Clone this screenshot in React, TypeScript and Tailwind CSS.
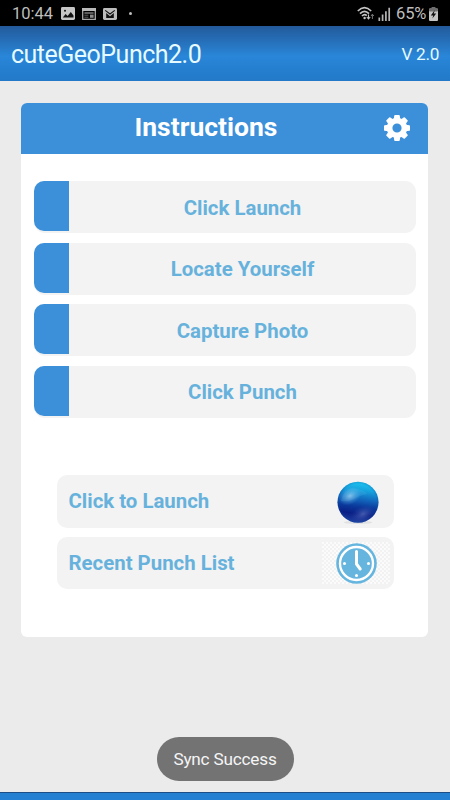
const steps = ["Click Launch", "Locate Yourself", "Capture Photo", "Click Punch"];

function StatusBar() {
  return (
    <div className="flex h-[26px] shrink-0 items-center bg-black pt-px text-[#bdbdbd]">
      <span className="ml-3 w-[49px] pt-px text-[16.5px] leading-none whitespace-nowrap">10:44</span>
      {/* picture */}
      <svg className="h-[13px] w-[14px]" viewBox="0 0 14 13">
        <rect x="0" y="0" width="14" height="13" rx="1.4" fill="#c6c6c6" />
        <path d="M1.8 10.6 4.6 7l2 2 3.2-4 2.7 3.4v2.2z" fill="#111" />
        <circle cx="4" cy="3.8" r="1" fill="#111" />
      </svg>
      {/* news */}
      <svg className="ml-[7px] h-[13px] w-[14px]" viewBox="0 0 14 13">
        <path d="M0.7 2v10.3h12.6V2" fill="none" stroke="#a9a9a9" strokeWidth="1.3" />
        <path d="M0 1h14v3H0z" fill="#b9b9b9" />
        <path d="M2.4 6h9.2" stroke="#9a9a9a" strokeWidth="1.2" />
        <path d="M2.4 8.2h4M2.4 10.2h4" stroke="#5f5f5f" />
        <path d="M8 7.6h3.6v3.2H8z" fill="#8c8c8c" />
      </svg>
      {/* mail */}
      <svg className="ml-[7px] h-[12px] w-[14px]" viewBox="0 0 14 12">
        <rect width="14" height="12" rx="1.4" fill="#bcbcbc" />
        <path d="M3.2 5v5h7.6V5L7 8.2z" fill="#111" />
        <path d="M2.2 2.4 7 6l4.8-3.6" fill="none" stroke="#111" strokeWidth="1.1" />
      </svg>
      <span className="ml-3 size-[3px] rounded-full bg-[#bdbdbd]" />

      {/* wifi */}
      <svg className="ml-auto h-[15px] w-[18px]" viewBox="0 0 18 15">
        <g fill="none" stroke="#c4c4c4" strokeWidth="1.7">
          <path d="M0.8 5Q7.5 -1.6 14.2 5" />
          <path d="M3 7.6Q7.5 3 12 7.6" />
          <path d="M5 10Q7.5 7.4 9.8 9.6" />
        </g>
        <circle cx="7.6" cy="12" r="1.2" fill="#c4c4c4" />
        <path d="M11.5 8.4v4.4M9.8 11l1.7 2 1.7-2" fill="none" stroke="#c4c4c4" strokeWidth="1.1" />
        <path d="M15.4 13V8.2M14 10l1.4-1.8 1.4 1.8" fill="none" stroke="#777" strokeWidth="1" />
      </svg>
      {/* signal */}
      <svg className="ml-[3px] h-[14px] w-[13px]" viewBox="0 0 13 14">
        <path d="M1.3 10.5V14M4.6 7.5V14M7.9 4.2V14M11.2 0.8V14" stroke="#b4b4b4" strokeWidth="1.7" />
      </svg>
      <span className="ml-[5px] w-[33px] pt-px text-[16.5px] leading-none tracking-[-0.1px] whitespace-nowrap">65%</span>
      {/* battery */}
      <svg className="mr-3 h-[14px] w-[9px]" viewBox="0 0 9 14">
        <rect x="0" y="1.6" width="9" height="12.4" rx="1" fill="#c4c4c4" />
        <rect x="0" y="1.6" width="9" height="3" rx="1" fill="#6e6e6e" />
        <rect x="2.6" y="0" width="3.8" height="2" fill="#6e6e6e" />
        <path d="M5.8 3 1.8 8.4h2.4l-0.8 3.2L7.2 6.6H4.8z" fill="#111" />
      </svg>
    </div>
  );
}

function Gear() {
  return (
    <svg className="size-[26px]" viewBox="-13 -13 26 26" fill="#fff">
      <circle r="7.4" fill="none" stroke="#fff" strokeWidth="5.6" />
      {[0, 45, 90, 135, 180, 225, 270, 315].map((a) => (
        <path
          key={a}
          transform={`rotate(${a})`}
          d="M-3.2 -9 -2.8 -12.2Q-2.7 -13 -1.9 -13H1.9Q2.7 -13 2.8 -12.2L3.2 -9z"
        />
      ))}
    </svg>
  );
}

function Ball() {
  return (
    <svg className="mt-[3px] h-[44px] w-[44px]" viewBox="0 0 44 44">
      <defs>
        <linearGradient id="ball" x1="0.58" y1="0" x2="0.44" y2="1">
          <stop offset="0" stopColor="#1cc6f2" />
          <stop offset="0.2" stopColor="#17a3de" />
          <stop offset="0.42" stopColor="#1268bd" />
          <stop offset="0.6" stopColor="#0b3a9c" />
          <stop offset="0.78" stopColor="#0a1f86" />
          <stop offset="1" stopColor="#2040a0" />
        </linearGradient>
        <radialGradient id="shine">
          <stop offset="0" stopColor="#c4edff" stopOpacity="0.6" />
          <stop offset="1" stopColor="#5fc0f0" stopOpacity="0" />
        </radialGradient>
        <radialGradient id="glow">
          <stop offset="0" stopColor="#7f94d6" stopOpacity="0.5" />
          <stop offset="1" stopColor="#3c55b0" stopOpacity="0" />
        </radialGradient>
        <radialGradient id="edge">
          <stop offset="0.88" stopColor="#0a50a5" stopOpacity="0" />
          <stop offset="1" stopColor="#0a50a5" stopOpacity="0.3" />
        </radialGradient>
      </defs>
      <ellipse cx="22" cy="41.4" rx="14" ry="1.6" fill="#e0e1e3" />
      <circle cx="22" cy="21.2" r="20.5" fill="url(#ball)" />
      <circle cx="22" cy="21.2" r="20.5" fill="url(#edge)" />
      <path d="M5 20Q7 9 16 7Q30 9 31 13Q24 14 18 18Q12 21 5 20z" fill="#77cdf5" opacity="0.14" />
      <ellipse cx="14" cy="15" rx="12" ry="8.5" fill="url(#shine)" transform="rotate(-28 14 15)" />
      <ellipse cx="27" cy="33" rx="13" ry="8" fill="url(#glow)" transform="rotate(-20 27 33)" />
    </svg>
  );
}

function Clock() {
  return (
    <svg className="size-[41px]" viewBox="-20.5 -20.5 41 41">
      <circle r="20.3" fill="#66b5df" />
      <circle r="16.5" fill="none" stroke="#fff" strokeWidth="2.4" />
      <path d="M0 -12V0.5L3.7 5.5" fill="none" stroke="#fff" strokeWidth="3" strokeLinecap="round" strokeLinejoin="round" />
      <circle cx="-12" r="1.5" fill="#fff" />
      <circle cx="12" r="1.5" fill="#fff" />
      <circle cy="12" r="1.5" fill="#fff" />
    </svg>
  );
}

export default function App() {
  return (
    <div className="flex h-[800px] w-[450px] flex-col overflow-hidden bg-[#ebebeb] font-['Roboto',sans-serif]">
      <StatusBar />
      <header className="flex h-[55px] shrink-0 items-center justify-between bg-linear-to-b from-[#225a9b] via-[#2986d8] via-55% to-[#2279c8] px-[11px] pt-[2px] text-[#e6fbff]">
        <h1 className="text-[25px] leading-none tracking-[-0.5px]">cuteGeoPunch2.0</h1>
        <span className="text-[17.2px] leading-none tracking-[-0.3px]">V 2.0</span>
      </header>

      <main className="mt-[22px] mr-[22px] ml-[21px] h-[534px] shrink-0 overflow-hidden rounded-[6px] bg-white">
        <div className="grid h-[51px] grid-cols-[1fr_26px] items-center bg-[#3b90d9] pr-[18px] pb-[2px]">
          <h2 className="pl-[7px] text-center text-[26.5px] leading-none font-bold text-white">Instructions</h2>
          <Gear />
        </div>

        <div className="mt-[27px] mr-[12px] ml-[13px] flex flex-col gap-[9.5px]">
          {steps.map((step) => (
            <div key={step} className="flex h-[52px] rounded-[11px] bg-[#f3f3f3]">
              <div className="h-[50px] w-[35px] rounded-l-[10px] bg-[#3b90d9]" />
              <p className="flex flex-1 items-center justify-center pt-[2px] text-[20.4px] leading-none font-bold text-[#67b2dc]">
                {step}
              </p>
            </div>
          ))}
        </div>

        <div className="mt-[57px] mr-[34px] ml-[36px] flex flex-col gap-[9px]">
          <button className="flex h-[53px] items-center justify-between rounded-[10px] bg-[#f3f3f3] pr-[14px] pl-[11.5px] text-[20.4px] leading-none font-bold text-[#67b2dc]">
            <span className="pt-px">Click to Launch</span>
            <Ball />
          </button>
          <button className="flex h-[52px] items-center justify-between rounded-[10px] bg-[#f3f3f3] pr-[4px] pl-[11.5px] text-[20.4px] leading-none font-bold text-[#67b2dc]">
            <span className="pt-[2px]">Recent Punch List</span>
            <span className="mt-px flex h-[42px] w-[68px] items-center justify-center bg-[repeating-conic-gradient(#f2f2f2_0_25%,#fbfbfb_0_50%)] bg-[length:4px_4px]">
              <Clock />
            </span>
          </button>
        </div>
      </main>

      <div className="mt-[100px] flex h-[44px] w-[137px] shrink-0 items-center justify-center self-center rounded-full bg-[#737373] pt-[2px] text-[17.2px] leading-none tracking-[-0.2px] text-[#f5f5f5]">
        Sync Success
      </div>

      <footer className="mt-auto h-[8px] shrink-0 border-t border-[#1d4f86] bg-[#2580d2]" />
    </div>
  );
}
